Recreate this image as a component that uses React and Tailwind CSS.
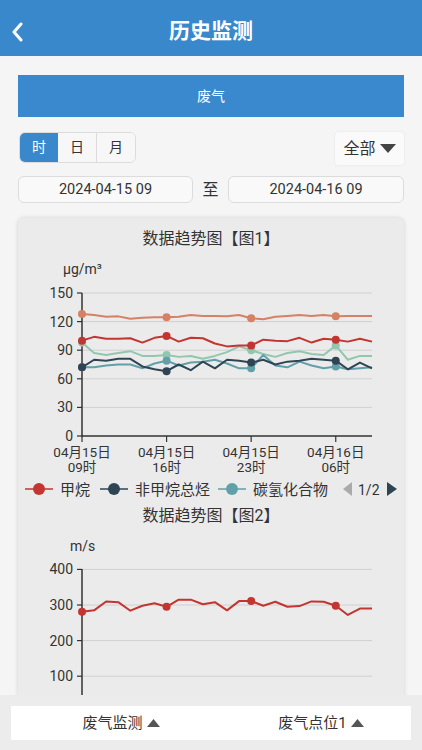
import React from "react";

// 图1 数据 (25 个小时点, 09时 ~ 次日09时)
const orange = [128, 127, 125, 125.5, 123, 124, 124.5, 124.5, 125, 127, 126, 126, 125.5, 127, 123.5, 122.5, 125, 126, 127, 126, 127, 125.5, 126, 126, 126];
const red = [100, 104, 102, 102, 102.5, 98, 103, 105, 99, 103, 102.5, 97, 94, 95, 95, 101, 100, 99.5, 103, 98, 102, 101, 99, 102, 99];
const navy = [72, 80, 79, 81, 81, 73, 70, 68, 75, 69, 78, 71, 80, 79, 77, 80, 75, 78, 79, 81, 80, 79, 70, 77, 71];
const green = [98, 87, 85, 87, 89, 84, 84, 85, 83, 84, 81, 84, 88, 94, 90, 86, 83, 87, 89, 86, 85, 95, 80, 84, 84];
const teal = [72, 72, 74, 75, 75, 71, 76, 79, 74, 77, 78, 80, 76, 71, 71, 85, 74, 72, 78, 74, 71, 73, 70, 71, 72];

// 图2 数据
const speed = [281, 285, 310, 308, 284, 298, 305, 295, 315, 315, 302, 308, 285, 311, 311, 298, 309, 295, 297, 310, 309, 298, 272, 290, 290];

const px = (i) => 82 + i * (290 / 24);
const py1 = (v) => 436 - v * (143 / 150);
const py2 = (v) => 605 + (300 - v) * 0.356;

const marks = [0, 7, 14, 21];

function Series({ data, fy, color }) {
    const pts = data.map((v, i) => `${px(i)},${fy(v)}`).join(" ");
    return (
        <g>
            <polyline points={pts} fill="none" stroke={color} strokeWidth="2" strokeLinejoin="round" />
            {marks.map((i) => (
                <circle key={i} cx={px(i)} cy={fy(data[i])} r="4" fill={color} />
            ))}
        </g>
    );
}

const txt = { fontFamily: "Roboto, 'Noto Sans CJK SC', sans-serif" };

function Chart1() {
    const ticks = [0, 30, 60, 90, 120, 150];
    const xs = [
        ["04月15日", "09时"],
        ["04月15日", "16时"],
        ["04月15日", "23时"],
        ["04月16日", "06时"],
    ];
    return (
        <svg viewBox="18 252 386 250" width="386" height="250" className="block" style={txt}>
            <text x="63" y="274" fontSize="14" fill="#333">μg/m³</text>
            {ticks.map((t) => (
                <g key={t}>
                    {t > 0 && <line x1="82" x2="372" y1={py1(t)} y2={py1(t)} stroke="#d0d0d0" strokeWidth="1" />}
                    <line x1="77" x2="82" y1={py1(t)} y2={py1(t)} stroke="#333" strokeWidth="1.2" />
                    <text x="73" y={py1(t) + 5} fontSize="14" fill="#333" textAnchor="end">{t}</text>
                </g>
            ))}
            <line x1="82" x2="82" y1="293" y2="437" stroke="#333" strokeWidth="1.5" />
            <line x1="82" x2="372" y1="436" y2="436" stroke="#333" strokeWidth="1.5" />
            {xs.map((l, k) => (
                <g key={k}>
                    <line x1={px(k * 7)} x2={px(k * 7)} y1="436" y2="442" stroke="#333" strokeWidth="1.2" />
                    <text x={px(k * 7)} y="457" fontSize="13.5" fill="#333" textAnchor="middle">{l[0]}</text>
                    <text x={px(k * 7)} y="472" fontSize="13.5" fill="#333" textAnchor="middle">{l[1]}</text>
                </g>
            ))}
            <Series data={orange} fy={py1} color="#d48265" />
            <Series data={green} fy={py1} color="#91c7ae" />
            <Series data={teal} fy={py1} color="#61a0a8" />
            <Series data={navy} fy={py1} color="#2f4554" />
            <Series data={red} fy={py1} color="#c23531" />

            {/* 图例 */}
            {[
                [25, "#c23531", "甲烷"],
                [100, "#2f4554", "非甲烷总烃"],
                [218, "#61a0a8", "碳氢化合物"],
            ].map(([x, c, name]) => (
                <g key={name}>
                    <line x1={x} x2={x + 28} y1="489" y2="489" stroke={c} strokeWidth="1.5" />
                    <circle cx={x + 14} cy="489" r="6" fill={c} />
                    <text x={x + 35} y="494.5" fontSize="15" fill="#333">{name}</text>
                </g>
            ))}
            <polygon points="352,482 352,496 343,489" fill="#aaa" />
            <text x="358" y="494.5" fontSize="14" fill="#333">1/2</text>
            <polygon points="387,482 387,496 397,489" fill="#2f4554" />
        </svg>
    );
}

function Chart2() {
    const ticks = [100, 200, 300, 400];
    return (
        <svg viewBox="18 530 386 180" width="386" height="180" className="block" style={txt}>
            <text x="70" y="551" fontSize="14" fill="#333">m/s</text>
            {ticks.map((t) => (
                <g key={t}>
                    <line x1="82" x2="372" y1={py2(t)} y2={py2(t)} stroke="#d0d0d0" strokeWidth="1" />
                    <line x1="77" x2="82" y1={py2(t)} y2={py2(t)} stroke="#333" strokeWidth="1.2" />
                    <text x="73" y={py2(t) + 5} fontSize="14" fill="#333" textAnchor="end">{t}</text>
                </g>
            ))}
            <line x1="82" x2="82" y1="569" y2="712" stroke="#333" strokeWidth="1.5" />
            <Series data={speed} fy={py2} color="#c23531" />
        </svg>
    );
}

export default function App() {
    return (
        <div
            className="w-[422px] h-[750px] flex flex-col bg-[#f5f5f5] overflow-hidden text-[#333]"
            style={{ fontFamily: "Roboto, 'Noto Sans CJK SC', sans-serif" }}
        >
            {/* 顶部标题栏 */}
            <div className="h-14 shrink-0 bg-[#3a88cc] flex items-center relative">
                <svg width="14" height="20" viewBox="0 0 14 20" className="absolute left-[11px] top-[22px]">
                    <path d="M10 2 L3 10 L10 18" fill="none" stroke="#fff" strokeWidth="3" strokeLinecap="round" strokeLinejoin="round" />
                </svg>
                <h1 className="w-full pt-2 text-center text-white text-[21px] font-bold">历史监测</h1>
            </div>

            {/* 内容 */}
            <div className="flex-1 overflow-hidden px-[18px] pt-[19px]">
                <div className="h-[42px] bg-[#3a88cd] text-white text-sm flex items-center justify-center">废气</div>

                <div className="mt-[15px] flex justify-between items-start">
                    <div className="ml-px flex h-[31px] border border-[#dcdcdc] rounded-md overflow-hidden text-[14px]">
                        <div className="w-[38px] bg-[#3a88cc] text-white flex items-center justify-center">时</div>
                        <div className="w-[39px] border-r border-[#dcdcdc] bg-[#f7f7f7] flex items-center justify-center">日</div>
                        <div className="w-[38px] bg-[#f7f7f7] flex items-center justify-center">月</div>
                    </div>
                    <div className="w-[69px] h-[33px] bg-[#fafafa] shadow-[0_0_3px_rgba(0,0,0,0.08)] rounded flex items-center justify-center gap-1 text-[16px]">
                        全部
                        <svg width="16" height="9" viewBox="0 0 16 9">
                            <polygon points="0,0 16,0 8,9" fill="#444" />
                        </svg>
                    </div>
                </div>

                <div className="mt-[11px] flex items-center">
                    <div className="w-[175px] h-[27px] border border-[#dcdcdc] rounded-md bg-[#f9f9f9] flex items-center justify-center text-[14.5px]">2024-04-15 09</div>
                    <div className="w-[35px] text-center text-[16px]">至</div>
                    <div className="w-[176px] h-[27px] border border-[#dcdcdc] rounded-md bg-[#f9f9f9] flex items-center justify-center text-[14.5px]">2024-04-16 09</div>
                </div>

                {/* 图表卡片 */}
                <div className="mt-[15px] bg-[#ebebeb] rounded-md shadow-[0_0_4px_rgba(0,0,0,0.15)]">
                    <div className="pt-[10px] h-[34px] text-center text-[16px] leading-[22px]">数据趋势图【图1】</div>
                    <Chart1 />
                    <div className="h-[28px] pt-[3px] text-center text-[16px] leading-[22px]">数据趋势图【图2】</div>
                    <Chart2 />
                </div>
            </div>

            {/* 底部选择栏 */}
            <div className="h-[55px] shrink-0 bg-[#ececec] px-[11px] pt-[11px]">
                <div className="h-[34px] bg-white grid grid-cols-2 text-[15px]">
                    <div className="flex items-center justify-center gap-1 pl-5">
                        废气监测
                        <svg width="13" height="8" viewBox="0 0 13 8"><polygon points="0,8 13,8 6.5,0" fill="#555" /></svg>
                    </div>
                    <div className="flex items-center justify-center gap-1 pl-5">
                        废气点位1
                        <svg width="13" height="8" viewBox="0 0 13 8"><polygon points="0,8 13,8 6.5,0" fill="#555" /></svg>
                    </div>
                </div>
            </div>
        </div>
    );
}
